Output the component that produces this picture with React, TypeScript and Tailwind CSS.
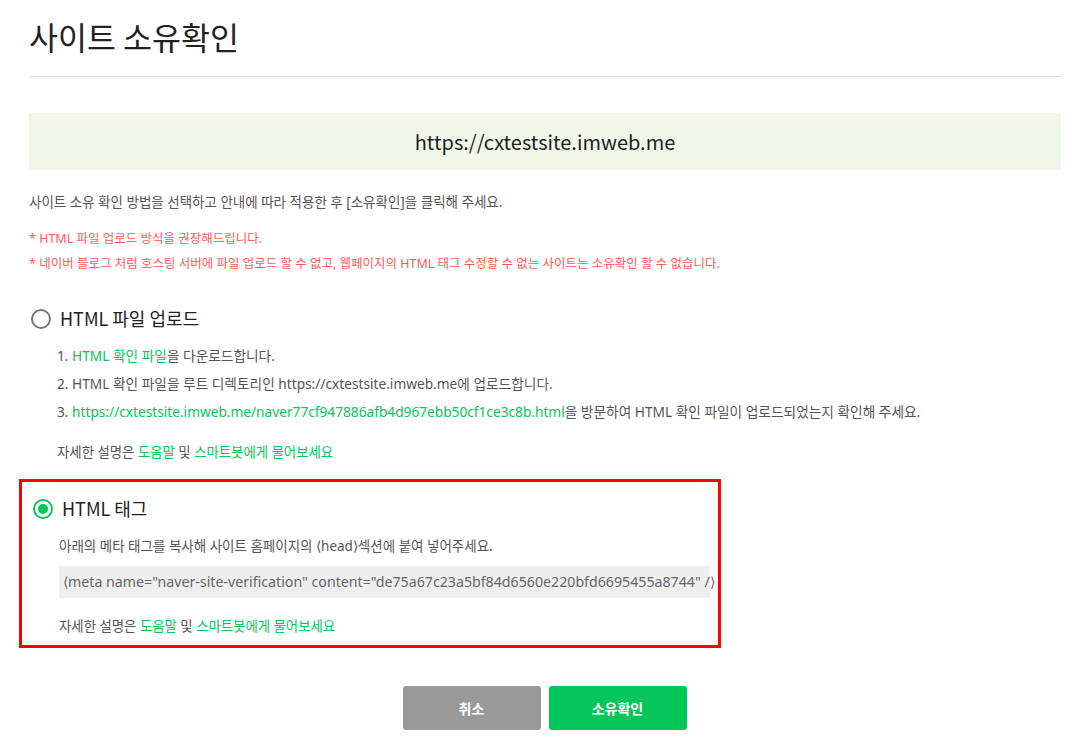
import React from 'react';

const FONT = '[font-family:"Noto_Sans_CJK_KR","Noto_Sans",sans-serif]';
const BODY = '[font-family:"Noto_Sans","Noto_Sans_CJK_KR",sans-serif]';

const Radio = ({ checked }: { checked: boolean }) =>
  checked ? (
    <span className="flex h-[20px] w-[20px] items-center justify-center rounded-full border-[2.5px] border-[#03c75a]">
      <span className="h-[10px] w-[10px] rounded-full bg-[#03c75a]" />
    </span>
  ) : (
    <span className="h-[20px] w-[20px] rounded-full border-2 border-[#777]" />
  );

const HelpLine = () => (
  <p className={`${BODY} text-[13.4px] text-[#555]`}>
    자세한 설명은 <span className="text-[#03c75a]">도움말</span> 및{' '}
    <span className="text-[#03c75a]">스마트봇에게 물어보세요</span>
  </p>
);

export default function App() {
  return (
    <div className={`min-h-screen bg-white ${FONT}`}>
      <div className="px-[29px] pt-[14px]">
        {/* Title */}
        <h1 className="text-[31.5px] leading-[44px] text-[#222]">사이트 소유확인</h1>
        <div className="mt-[18px] h-px w-[1032px] bg-[#dedede]" />

        {/* Site url */}
        <div className="mt-[36px] flex h-[57px] w-[1032px] items-center justify-center bg-[#f0f6e8] text-[20px] text-[#222]">
          https://cxtestsite.imweb.me
        </div>

        <p className={`${BODY} mt-[22px] text-[13.5px] leading-[20px] text-[#555]`}>
          사이트 소유 확인 방법을 선택하고 안내에 따라 적용한 후 [소유확인]을 클릭해 주세요.
        </p>
        <div className={`${BODY} mt-[17px] flex flex-col gap-[5px] text-[12.5px] leading-[20px] text-[#ff5a5a]`}>
          <p>* HTML 파일 업로드 방식을 권장해드립니다.</p>
          <p>* 네이버 블로그 처럼 호스팅 서버에 파일 업로드 할 수 없고, 웹페이지의 HTML 태그 수정할 수 없는 사이트는 소유확인 할 수 없습니다.</p>
        </div>

        {/* Option 1 */}
        <div className="mt-[31px] pl-[2px]">
          <div className="flex items-center gap-[9px]">
            <Radio checked={false} />
            <span className="text-[18px] text-[#222]">HTML 파일 업로드</span>
          </div>
          <div className={`${BODY} mt-[14px] flex flex-col gap-[8px] pl-[26px] text-[13.7px] leading-[20px] text-[#555]`}>
            <p>
              1. <span className="text-[#03c75a]">HTML 확인 파일</span>을 다운로드합니다.
            </p>
            <p>2. HTML 확인 파일을 루트 디렉토리인 https://cxtestsite.imweb.me에 업로드합니다.</p>
            <p>
              3.{' '}
              <span className="text-[#03c75a]">
                https://cxtestsite.imweb.me/naver77cf947886afb4d967ebb50cf1ce3c8b.html
              </span>
              을 방문하여 HTML 확인 파일이 업로드되었는지 확인해 주세요.
            </p>
            <div className="mt-[12px]">
              <HelpLine />
            </div>
          </div>
        </div>

        {/* Option 2 (highlighted) */}
        <div className="mt-[17px] -ml-[10px] w-[702px] border-[3px] border-[#ff0000] pb-[9px] pl-[11px] pt-[13px]">
          <div className="flex items-center gap-[9px]">
            <Radio checked />
            <span className="text-[18px] text-[#222]">HTML 태그</span>
          </div>
          <div className={`${BODY} mt-[14px] pl-[26px] text-[13.5px] leading-[20px] text-[#555]`}>
            <p>아래의 메타 태그를 복사해 사이트 홈페이지의 ⟨head⟩섹션에 붙여 넣어주세요.</p>
            <div className="mt-[10px] flex h-[32px] w-[651px] items-center whitespace-nowrap bg-[#eeeeee] px-[4px] text-[14.2px] text-[#666]">
              ⟨meta name="naver-site-verification" content="de75a67c23a5bf84d6560e220bfd6695455a8744" /⟩
            </div>
            <div className="mt-[18px]">
              <HelpLine />
            </div>
          </div>
        </div>

        {/* Buttons */}
        <div className="mt-[38px] flex justify-center gap-[8px] pl-[10px]">
          <button className="h-[44px] w-[138px] rounded-[3px] bg-[#999999] text-[14px] font-bold text-white">
            취소
          </button>
          <button className="h-[44px] w-[138px] rounded-[3px] bg-[#03c75a] text-[14px] font-bold text-white">
            소유확인
          </button>
        </div>
      </div>
    </div>
  );
}
